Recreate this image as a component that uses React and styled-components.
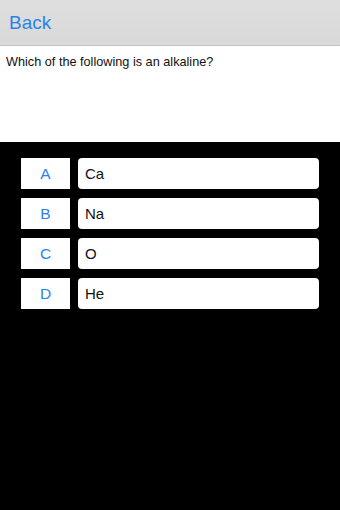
import React from "react";
import styled, { createGlobalStyle } from "styled-components";

const GlobalStyle = createGlobalStyle`
  html, body {
    margin: 0;
    padding: 0;
    background: #000;
  }
  body {
    font-family: "Liberation Sans", Arial, sans-serif;
  }
`;

const Screen = styled.div`
  width: 340px;
  height: 510px;
  display: flex;
  flex-direction: column;
  background: #000;
  overflow: hidden;
`;

const NavBar = styled.div`
  height: 46px;
  box-sizing: border-box;
  display: flex;
  align-items: center;
  padding-left: 9px;
  background: linear-gradient(#dedede, #d9d9d9);
  border-bottom: 1px solid #c4c4c4;
`;

const BackButton = styled.span`
  color: #2a84e6;
  font-size: 19px;
  margin-top: 1px;
`;

const QuestionPanel = styled.div`
  height: 96px;
  background: #fff;
  padding: 9px 6px 0;
  box-sizing: border-box;
  font-size: 12.7px;
  color: #111;
`;

const Answers = styled.div`
  display: flex;
  flex-direction: column;
  gap: 9px;
  padding: 16px 21px 0 21px;
`;

const Row = styled.div`
  display: flex;
  gap: 8px;
  height: 31px;
`;

const Letter = styled.div`
  width: 49px;
  background: #fff;
  display: flex;
  align-items: center;
  justify-content: center;
  color: #2a84e6;
  font-size: 15.5px;
`;

const Choice = styled.div`
  flex: 1;
  background: #fff;
  border-radius: 4px;
  display: flex;
  align-items: center;
  padding-left: 7px;
  font-size: 15px;
  color: #111;
`;

const options = [
  ["A", "Ca"],
  ["B", "Na"],
  ["C", "O"],
  ["D", "He"],
];

export default function App() {
  return (
    <Screen>
      <GlobalStyle />
      <NavBar>
        <BackButton>Back</BackButton>
      </NavBar>
      <QuestionPanel>Which of the following is an alkaline?</QuestionPanel>
      <Answers>
        {options.map(([letter, text]) => (
          <Row key={letter}>
            <Letter>{letter}</Letter>
            <Choice>{text}</Choice>
          </Row>
        ))}
      </Answers>
    </Screen>
  );
}
